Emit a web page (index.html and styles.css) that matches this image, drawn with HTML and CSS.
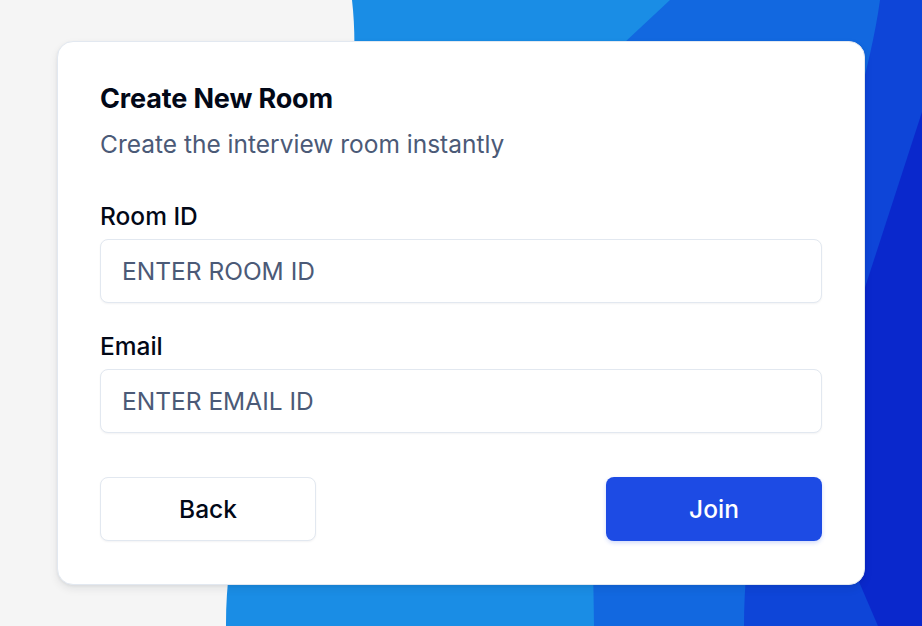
FILE: index.html
```html
<!DOCTYPE html>
<html lang="en">
<head>
<meta charset="utf-8">
<title>Create New Room</title>
<link rel="stylesheet" href="styles.css">
</head>
<body>
<svg class="bg" viewBox="0 0 922 626" preserveAspectRatio="none" aria-hidden="true">
  <rect x="0" y="0" width="922" height="626" fill="#f5f5f5"/>
  <path d="M352,0 C375,200 225,420 226,626 L922,626 L922,0 Z" fill="#1a8de5"/>
  <path d="M670,0 L922,0 L922,626 L594,626 C592,450 580,250 595,70 Z" fill="#1268e0"/>
  <path d="M744,626 C745,400 860,150 880,0 L922,0 L922,626 Z" fill="#0e45d8"/>
  <path d="M922,112 L808,463 L878,626 L922,626 Z" fill="#0a28cc"/>
</svg>
<main class="page">
  <section class="card">
    <h1 class="title">Create New Room</h1>
    <p class="subtitle">Create the interview room instantly</p>
    <form class="form">
      <label class="field">
        <span class="label">Room ID</span>
        <input class="input" type="text" placeholder="ENTER ROOM ID">
      </label>
      <label class="field field-second">
        <span class="label">Email</span>
        <input class="input" type="text" placeholder="ENTER EMAIL ID">
      </label>
      <div class="actions">
        <button type="button" class="btn btn-back">Back</button>
        <button type="button" class="btn btn-join">Join</button>
      </div>
    </form>
  </section>
</main>
</body>
</html>
```

FILE: styles.css
```css
* { box-sizing: border-box; }

html, body {
  margin: 0;
  padding: 0;
  height: 100%;
  overflow: hidden;
}

body {
  font-family: Inter, "Noto Sans", "Liberation Sans", sans-serif;
  background: #f5f5f5;
  position: relative;
}

.bg {
  position: absolute;
  inset: 0;
  width: 100%;
  height: 100%;
  z-index: 0;
  display: block;
}

.page {
  position: relative;
  z-index: 1;
  height: 100%;
  display: flex;
  align-items: center;
  justify-content: center;
}

.card {
  width: 808px;
  background: #ffffff;
  border: 1px solid #e2e8f0;
  border-radius: 16px;
  box-shadow: 0 4px 8px rgba(15, 23, 42, 0.08), 0 1px 3px rgba(15, 23, 42, 0.06);
  padding: 41px 42px 43px;
  display: flex;
  flex-direction: column;
}

.title {
  margin: 0;
  font-size: 27px;
  line-height: 32px;
  font-weight: 700;
  color: #020817;
  letter-spacing: -0.15px;
}

.subtitle {
  margin: 13px 0 0;
  font-size: 24.5px;
  line-height: 32px;
  font-weight: 400;
  color: #4b5a77;
}

.form {
  margin-top: 40px;
  display: flex;
  flex-direction: column;
}

.field {
  display: flex;
  flex-direction: column;
  gap: 7px;
}

.field-second {
  margin-top: 27px;
}

.label {
  font-size: 24.5px;
  line-height: 32px;
  font-weight: 500;
  color: #020817;
}

.input {
  height: 64px;
  width: 100%;
  border: 1px solid #e2e8f0;
  border-radius: 8px;
  padding: 0 21px;
  font-family: inherit;
  font-size: 24.5px;
  color: #020817;
  background: #ffffff;
  box-shadow: 0 1px 2px rgba(15, 23, 42, 0.05);
  outline: none;
}

.input::placeholder {
  color: #4b5a77;
  opacity: 1;
}

.actions {
  margin-top: 44px;
  display: flex;
  justify-content: space-between;
}

.btn {
  width: 216px;
  height: 64px;
  border-radius: 8px;
  font-family: inherit;
  font-size: 24.5px;
  font-weight: 500;
  cursor: pointer;
}

.btn-back {
  background: #ffffff;
  color: #020817;
  border: 1px solid #e2e8f0;
  box-shadow: 0 1px 2px rgba(15, 23, 42, 0.05);
}

.btn-join {
  background: #1d4be4;
  color: #ffffff;
  border: none;
  box-shadow: 0 2px 4px rgba(29, 75, 228, 0.2);
}
```
